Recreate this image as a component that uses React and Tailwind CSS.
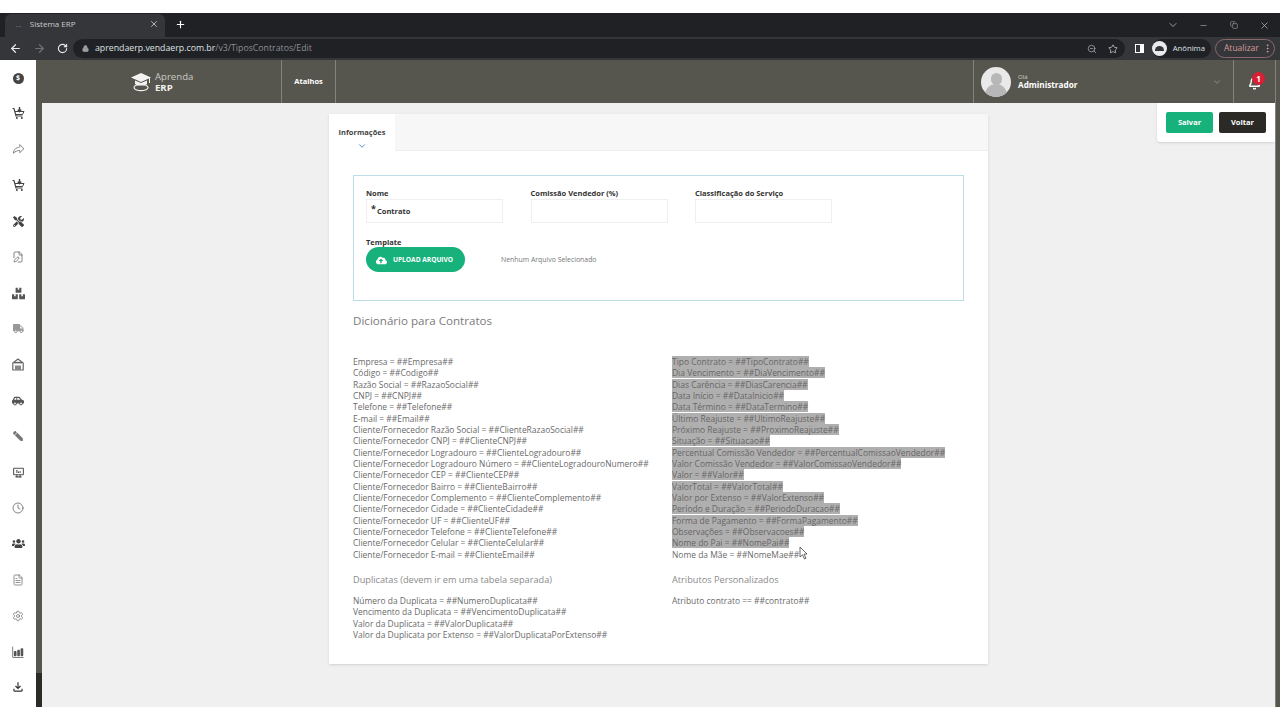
import React from "react";
import {
  ArrowLeft, ArrowRight, RotateCw, Lock, ZoomOut, Star, X, Plus, Minus, ChevronDown, Copy, EllipsisVertical,
  Bell, FilePen, Clock, FileText, Settings,
} from "lucide-react";
import { FaTools, FaBoxes, FaTruck, FaCarSide, FaPen, FaUsers, FaCloudUploadAlt } from "react-icons/fa";
import { PiShareFat } from "react-icons/pi";
import { IoBarChart } from "react-icons/io5";
import { TbDeviceDesktopAnalytics } from "react-icons/tb";
import { MdOutlineFileDownload } from "react-icons/md";

const font = { fontFamily: '"Open Sans", sans-serif' };

function CoinIcon() {
  return (
    <span className="w-[11px] h-[11px] rounded-full bg-[#444] text-white text-[7px] font-bold flex items-center justify-center">$</span>
  );
}

function CartDownIcon() {
  return (
    <svg width="13" height="13" viewBox="0 0 13 13" fill="none" stroke="#444" strokeWidth="1.2">
      <path d="M0.5 1.5 H2 L4 9 H10.5" />
      <path d="M3 4.5 H12 L10.5 7.5 H3.8" strokeWidth="1" />
      <circle cx="4.8" cy="11" r="1" fill="#444" stroke="none" />
      <circle cx="9.8" cy="11" r="1" fill="#444" stroke="none" />
      <path d="M7.5 0 V4 M5.8 2.6 L7.5 4.6 L9.2 2.6" strokeWidth="1.4" />
    </svg>
  );
}

function StoreIcon() {
  return (
    <svg width="12" height="13" viewBox="0 0 12 13" fill="none" stroke="#666" strokeWidth="1.2">
      <path d="M0.8 5 L6 1 L11.2 5 V12 H0.8 Z" />
      <path d="M2 4.6 H10" strokeWidth="1.6" />
      <path d="M3 7.5 H9 V12 H3 Z" fill="#888" stroke="none" />
    </svg>
  );
}

const sideIcons = [
  <CoinIcon />,
  <CartDownIcon />,
  <PiShareFat size={13} className="text-[#888]" />,
  <CartDownIcon />,
  <FaTools size={11} className="text-[#444]" />,
  <FilePen size={12} strokeWidth={1.6} className="text-[#666]" />,
  <FaBoxes size={13} className="text-[#555]" />,
  <FaTruck size={11} className="text-[#999]" />,
  <StoreIcon />,
  <FaCarSide size={12} className="text-[#555]" />,
  <FaPen size={10} className="text-[#777] -scale-x-100" />,
  <TbDeviceDesktopAnalytics size={13} className="text-[#555]" />,
  <Clock size={12} strokeWidth={1.6} className="text-[#666]" />,
  <FaUsers size={13} className="text-[#444]" />,
  <FileText size={12} strokeWidth={1.6} className="text-[#777]" />,
  <Settings size={12} strokeWidth={1.4} className="text-[#666]" />,
  <IoBarChart size={12} className="text-[#555]" />,
  <MdOutlineFileDownload size={14} className="text-[#333]" />,
];

const leftList = [
  "Empresa = ##Empresa##",
  "Código = ##Codigo##",
  "Razão Social = ##RazaoSocial##",
  "CNPJ = ##CNPJ##",
  "Telefone = ##Telefone##",
  "E-mail = ##Email##",
  "Cliente/Fornecedor Razão Social = ##ClienteRazaoSocial##",
  "Cliente/Fornecedor CNPJ = ##ClienteCNPJ##",
  "Cliente/Fornecedor Logradouro = ##ClienteLogradouro##",
  "Cliente/Fornecedor Logradouro Número = ##ClienteLogradouroNumero##",
  "Cliente/Fornecedor CEP = ##ClienteCEP##",
  "Cliente/Fornecedor Bairro = ##ClienteBairro##",
  "Cliente/Fornecedor Complemento = ##ClienteComplemento##",
  "Cliente/Fornecedor Cidade = ##ClienteCidade##",
  "Cliente/Fornecedor UF = ##ClienteUF##",
  "Cliente/Fornecedor Telefone = ##ClienteTelefone##",
  "Cliente/Fornecedor Celular = ##ClienteCelular##",
  "Cliente/Fornecedor E-mail = ##ClienteEmail##",
];

const rightList = [
  "Tipo Contrato = ##TipoContrato##",
  "Dia Vencimento = ##DiaVencimento##",
  "Dias Carência = ##DiasCarencia##",
  "Data Início = ##DataInicio##",
  "Data Término = ##DataTermino##",
  "Último Reajuste = ##UltimoReajuste##",
  "Próximo Reajuste = ##ProximoReajuste##",
  "Situação = ##Situacao##",
  "Percentual Comissão Vendedor = ##PercentualComissaoVendedor##",
  "Valor Comissão Vendedor = ##ValorComissaoVendedor##",
  "Valor = ##Valor##",
  "ValorTotal = ##ValorTotal##",
  "Valor por Extenso = ##ValorExtenso##",
  "Período e Duração = ##PeriodoDuracao##",
  "Forma de Pagamento = ##FormaPagamento##",
  "Observações = ##Observacoes##",
  "Nome do Pai = ##NomePai##",
];

const dupList = [
  "Número da Duplicata = ##NumeroDuplicata##",
  "Vencimento da Duplicata = ##VencimentoDuplicata##",
  "Valor da Duplicata = ##ValorDuplicata##",
  "Valor da Duplicata por Extenso = ##ValorDuplicataPorExtenso##",
];

function Line({ children, selected }) {
  return (
    <div className="h-[11.33px] leading-[11.33px] whitespace-nowrap">
      <span className={selected ? "bg-[#b0afaf] text-[#666]" : ""}>{children}</span>
    </div>
  );
}

function Field({ label, value, star }) {
  return (
    <div className="w-[137px]">
      <div className="text-[7.5px] leading-[9px] font-bold text-[#333]">{label}</div>
      <div className="relative mt-px h-[24px] border border-[#efefef] bg-white pl-[10px] text-[7.5px] leading-[22px] font-bold text-[#333]">
        {star && <span className="absolute left-[4px] top-[-2px] text-[9px]">*</span>}
        {value}
      </div>
    </div>
  );
}

function ChromeBar() {
  return (
    <div className="h-[47px] shrink-0 flex flex-col">
      <div className="h-[24px] bg-[#202124] flex text-[#c9cacc] relative">
        <div className="ml-[5px] mt-[1px] w-[160px] h-[23px] rounded-t-[6px] bg-[#35363a] flex items-center pl-[11px] pr-[6px] pb-[3px] text-[8px]">
          <span className="mr-[8px] tracking-widest text-[#9aa0a6]">..</span>
          <span className="flex-1">Sistema ERP</span>
          <X size={10} strokeWidth={2} />
        </div>
        <Plus size={11} strokeWidth={2.5} className="ml-[10px] mt-[6px] text-white" />
        <div className="ml-auto flex items-center pr-[1px] text-[#bdc1c6]">
          <div className="w-[30px] flex justify-center"><ChevronDown size={12} strokeWidth={1.5} /></div>
          <div className="w-[31px] flex justify-center"><Minus size={9} strokeWidth={1.5} /></div>
          <div className="w-[30px] flex justify-center"><Copy size={8} strokeWidth={1.5} /></div>
          <div className="w-[30px] flex justify-center"><X size={11} strokeWidth={1.5} /></div>
        </div>
      </div>
      <div className="h-[23px] bg-[#35363a] flex items-center pl-[9px] text-[#e8eaed]">
        <ArrowLeft size={13} strokeWidth={2.2} />
        <ArrowRight size={13} strokeWidth={2.2} className="ml-[11px] text-[#6f7175]" />
        <RotateCw size={11} strokeWidth={2.4} className="ml-[11px]" />
        <div className="ml-[5px] flex-1 h-[19px] rounded-full bg-[#202124] flex items-center pl-[9px] text-[8.75px] w-0">
          <Lock size={7} strokeWidth={2.5} fill="#9aa0a6" className="text-[#9aa0a6]" />
          <span className="ml-[6px] text-[#dfe1e5]">aprendaerp.vendaerp.com.br</span>
          <span className="text-[#8c8f94]">/v3/TiposContratos/Edit</span>
          <ZoomOut size={10} className="ml-auto text-[#9aa0a6]" />
          <Star size={10} className="ml-[11px] mr-[7px] text-[#bdc1c6]" />
        </div>
        <div className="ml-[10px] w-[9px] h-[9px] border-[1.5px] border-white border-r-[4px] mr-[8px]" />
        <div className="h-[19px] flex items-center rounded-full bg-[#202124] pr-[6px] mr-[4px]">
          <div className="w-[15px] h-[15px] rounded-full bg-[#e8eaed] mr-[6px] flex items-center justify-center">
            <div className="w-[9px] h-[5px] rounded-t-full bg-[#35363a]" />
          </div>
          <span className="text-[7.7px] text-[#dfe1e5]">Anônima</span>
        </div>
        <div className="h-[19px] w-[60px] mr-[5px] rounded-full border border-[#8a6868] text-[#d39a98] text-[8.5px] flex items-center pl-[8px] justify-between pr-[1px]">
          Atualizar
          <EllipsisVertical size={11} />
        </div>
      </div>
    </div>
  );
}

function Header() {
  return (
    <div className="h-[43px] bg-[#57564e] flex text-white">
      <div className="w-[246px] flex items-center pl-[94px] gap-[3px] border-r border-[#85847c]">
        <svg width="22" height="20" viewBox="0 0 22 20">
          <path d="M11 1 L21 5.5 L11 10 L1 5.5 Z" fill="#f2f2f0" />
          <path d="M5 8.5 V12 C7 14 15 14 17 12 V8.5 L11 11 Z" fill="#f2f2f0" />
          <ellipse cx="11" cy="15.5" rx="7" ry="3.2" fill="none" stroke="#f2f2f0" strokeWidth="1.2" />
          <path d="M19.5 6 V11" stroke="#f2f2f0" strokeWidth="1" />
        </svg>
        <div className="leading-[11px]">
          <div className="text-[9.6px] text-[#c9c9c4]">Aprenda</div>
          <div className="text-[9.6px] font-bold text-[#f2f2f0]">ERP</div>
        </div>
      </div>
      <div className="w-[54px] flex items-center justify-center text-[7.5px] font-bold border-r border-[#85847c]">Atalhos</div>
      <div className="flex-1" />
      <div className="w-[261px] flex items-center border-l border-r border-[#85847c] pl-[7px]">
        <div className="w-[30px] h-[30px] rounded-full bg-[#e9e9e9] overflow-hidden flex flex-col items-center">
          <div className="w-[11px] h-[14px] mt-[6px] rounded-full bg-[#b7b7b7]" />
          <div className="w-[22px] h-[14px] -mt-[1px] rounded-t-full bg-[#b7b7b7]" />
        </div>
        <div className="ml-[7px] leading-[8px] -mt-[2px]">
          <div className="text-[6px] text-[#cfcfca]">Olá</div>
          <div className="text-[8.2px] font-bold">Administrador</div>
        </div>
        <ChevronDown size={10} className="ml-auto mr-[11px] text-[#96958e]" />
      </div>
      <div className="w-[41px] relative flex items-center justify-center">
        <Bell size={13} strokeWidth={2.5} className="mt-[3px]" />
        <span className="absolute right-[10px] top-[12px] w-[13px] h-[13px] rounded-full bg-[#d81f35] text-[8px] font-bold flex items-center justify-center">1</span>
      </div>
      <div className="w-[5px] border-l border-[#85847c]" />
    </div>
  );
}

export default function App() {
  return (
    <div style={font} className="w-[1280px] h-[720px] overflow-hidden bg-white flex flex-col pt-[13px] pb-[13px]">
      <ChromeBar />
      <div className="flex-1 flex min-h-0">
        <div className="w-[36px] bg-white flex flex-col items-center pt-[10px] gap-[19.85px]">
          {sideIcons.map((icon, i) => (
            <div key={i} className="h-[16px] flex items-center justify-center shrink-0">{icon}</div>
          ))}
        </div>
        <div className="flex-1 flex flex-col min-w-0">
          <Header />
          <div className="relative flex-1 bg-[#f0f0f0] flex">
            <div className="w-[6px] flex flex-col bg-[#57564e]">
              <div className="mt-auto h-[34px] bg-[#2b2b27]" />
            </div>
            <div className="flex-1 pl-[287px]">
              <div className="mt-[11px] w-[659px] h-[550px] bg-white shadow-sm">
                <div className="h-[37px] bg-[#f7f7f7] border-b border-[#eeeeee] flex">
                  <div className="w-[66px] h-[37px] bg-white flex flex-col items-center pt-[14px] text-[7.5px] leading-[9px] font-bold text-[#444]">
                    Informações
                    <ChevronDown size={10} strokeWidth={2} className="mt-[4px] text-[#2f7ab5]" />
                  </div>
                </div>
                <div className="mx-[24px] mt-[24px] w-[611px] h-[126px] border border-[#bcdde6] pt-[13px] px-[12px]">
                  <div className="flex gap-[27.5px]">
                    <Field label="Nome" value="Contrato" star />
                    <Field label="Comissão Vendedor (%)" />
                    <Field label="Classificação do Serviço" />
                  </div>
                  <div className="mt-[15px] text-[7.5px] leading-[9px] font-bold text-[#333]">Template</div>
                  <div className="flex items-center">
                    <button className="w-[99px] h-[25px] rounded-full bg-[#17b17c] text-white text-[6.6px] font-bold flex items-center pl-[10px] pt-px gap-[6px]">
                      <FaCloudUploadAlt size={11} />
                      UPLOAD ARQUIVO
                    </button>
                    <span className="ml-[36px] pt-[2px] text-[6.9px] text-[#777]">Nenhum Arquivo Selecionado</span>
                  </div>
                </div>
                <div className="mx-[24px] mt-[12px] text-[11.6px] leading-[16px] text-[#7b7b7b]">Dicionário para Contratos</div>
                <div className="mx-[24px] mt-[27px] grid grid-cols-[319px_1fr] text-[8.45px] text-[#6a6a6a]">
                  <div>
                    {leftList.map((t) => <Line key={t}>{t}</Line>)}
                    <div className="mt-[13px] mb-[8px] text-[9.2px] leading-[14px] text-[#8a8a8a]">Duplicatas (devem ir em uma tabela separada)</div>
                    {dupList.map((t) => <Line key={t}>{t}</Line>)}
                  </div>
                  <div className="relative">
                    {rightList.map((t) => <Line key={t} selected>{t}</Line>)}
                    <Line>Nome da Mãe = ##NomeMae##</Line>
                    <div className="mt-[13px] mb-[8px] text-[9.2px] leading-[14px] text-[#8a8a8a]">Atributos Personalizados</div>
                    <Line>Atributo contrato == ##contrato##</Line>
                    <svg width="9" height="14" viewBox="0 0 9 14" className="absolute left-[127px] top-[190px]">
                      <path d="M1 1 V11 L3.5 8.8 L5.5 13 L7 12.2 L5 8.2 L8 8 Z" fill="#fff" stroke="#444" strokeWidth="0.8" />
                    </svg>
                  </div>
                </div>
              </div>
            </div>
            <div className="absolute right-[5px] top-0 w-[118px] h-[39px] bg-white rounded-bl-[3px] shadow flex items-center gap-[6px] pl-[9px]">
              <button className="w-[47px] h-[21px] rounded-[2px] bg-[#17b17c] text-white text-[7.5px] font-bold">Salvar</button>
              <button className="w-[47px] h-[21px] rounded-[2px] bg-[#2b2a26] text-white text-[7.5px] font-bold">Voltar</button>
            </div>
            <div className="w-[5px] bg-[#57564e] border-l border-[#85847c] z-10" />
          </div>
        </div>
      </div>
    </div>
  );
}
